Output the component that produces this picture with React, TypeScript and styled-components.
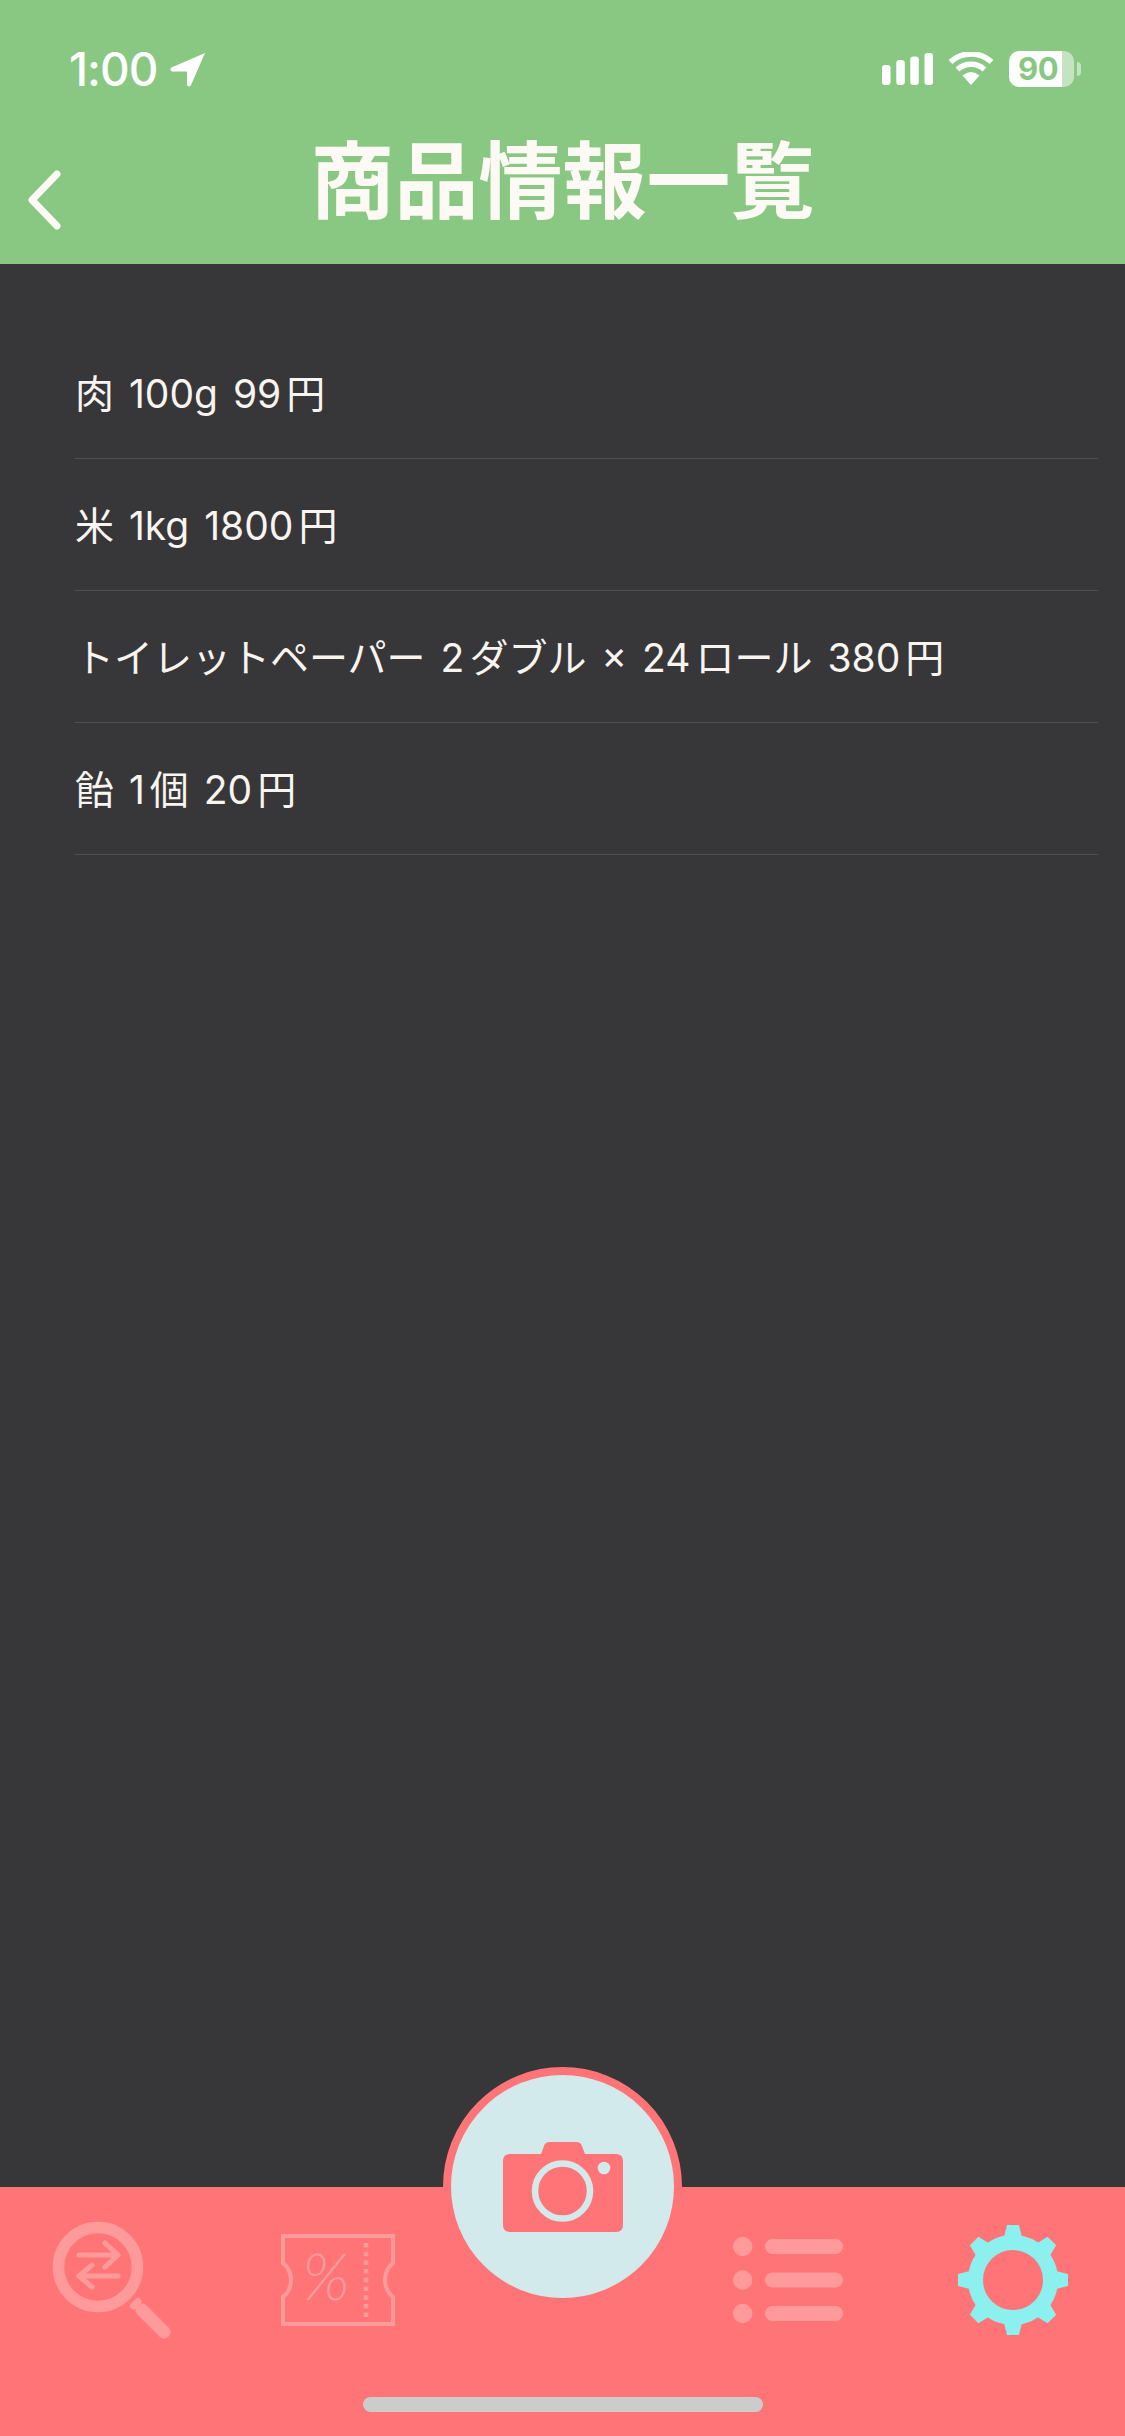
import React from "react";
import styled, { createGlobalStyle } from "styled-components";

const Global = createGlobalStyle`
  html, body { margin: 0; padding: 0; background: #373739; }
  * { box-sizing: border-box; }
`;

const GREEN = "#89c882";
const CORAL = "#ff7477";
const PALE = "#ff9a9b";
const MIST = "#d2eaeb";
const AQUA = "#8cf0ee";

const Screen = styled.div`
  width: 1125px;
  height: 2436px;
  display: flex;
  flex-direction: column;
  background: #373739;
  overflow: hidden;
  font-family: Inter, "Noto Sans CJK JP", sans-serif;
`;

const Header = styled.header`
  height: 264px;
  flex: none;
  background: ${GREEN};
  display: flex;
  flex-direction: column;
`;

const StatusBar = styled.div`
  height: 87px;
  margin-top: 50px;
  padding: 0 51px 0 69px;
  display: flex;
  justify-content: space-between;
  align-items: flex-start;
  color: #fff;
`;

const StatusGroup = styled.div`
  display: flex;
  align-items: flex-start;
  gap: ${(p: { $gap: number }) => p.$gap}px;
`;

const Clock = styled.span`
  font-size: 46px;
  font-weight: 500;
  line-height: 38px;
  letter-spacing: -1px;
`;

const StatusIcon = styled.svg`
  display: block;
  flex: none;
  margin-top: ${(p: { $top?: number }) => p.$top ?? 2}px;
`;

const Battery = styled.div`
  width: 65px;
  height: 36px;
  margin-top: 1px;
  position: relative;
  border-radius: 10px;
  background: linear-gradient(to right, #fff 82%, rgba(255, 255, 255, 0.5) 82%);
  color: ${GREEN};
  font-size: 31px;
  font-weight: 700;
  line-height: 36px;
  padding-left: 9px;
  letter-spacing: -0.5px;
  &::after {
    content: "";
    position: absolute;
    left: 68px;
    top: 11px;
    width: 4px;
    height: 14px;
    border-radius: 0 4px 4px 0;
    background: rgba(255, 255, 255, 0.5);
  }
`;

const NavBar = styled.div`
  position: relative;
  flex: 1;
  display: flex;
  align-items: center;
  justify-content: center;
`;

const BackButton = styled.svg`
  position: absolute;
  left: 26px;
  top: 43px;
`;

const Title = styled.h1`
  margin: 0 0 38px;
  color: #fdf9f5;
  font-family: "Noto Sans CJK JP", sans-serif;
  font-size: 84px;
  font-weight: 700;
  line-height: 100px;
`;

const ProductList = styled.ul`
  flex: 1;
  list-style: none;
  margin: 0;
  padding: 63px 27px 0 75px;
`;

const ProductRow = styled.li`
  height: 132px;
  border-bottom: 1px solid #505052;
  padding-bottom: 4px;
  display: flex;
  align-items: center;
  color: #f8f4f0;
  font-size: 39px;
  font-weight: 400;
  word-spacing: 4px;
  white-space: pre;
`;

const TextGap = styled.span`
  display: inline-block;
  width: 5px;
`;

const TabBar = styled.footer`
  height: 249px;
  flex: none;
  background: ${CORAL};
  display: flex;
  flex-direction: column;
  align-items: center;
`;

const TabGrid = styled.nav`
  width: 100%;
  height: 186px;
  flex: none;
  display: grid;
  grid-template-columns: repeat(5, 225px);
  align-items: center;
  justify-items: center;
`;

const TabIcon = styled.svg`
  display: block;
  overflow: visible;
`;

const CameraButton = styled.div`
  width: 239px;
  height: 239px;
  flex: none;
  align-self: start;
  margin-top: -120px;
  border: 8px solid ${CORAL};
  border-radius: 50%;
  background: ${MIST};
  display: flex;
  align-items: center;
  justify-content: center;
`;

const HomeIndicator = styled.div`
  width: 400px;
  height: 15px;
  margin-top: 24px;
  border-radius: 8px;
  background: #cccccc;
`;

const products = [
  ["肉 100g 99", "円"],
  ["米 1kg 1800", "円"],
  ["トイレットペーパー 2", "ダブル × 24", "ロール 380", "円"],
  ["飴 1", "個 20", "円"],
];

const SearchIcon = () => (
  <TabIcon width="118" height="116" viewBox="1 0 118 116" fill="none" stroke={PALE}>
    <circle cx="45" cy="45" r="39.5" strokeWidth="11.5" />
    <path d="M26 33H65M52 21L65 33L52 45M65 54H26M39 43L26 54L39 65" strokeWidth="5" strokeLinecap="round" strokeLinejoin="round" />
    <path d="M80.5 84L85 79.5" strokeWidth="7" strokeLinecap="round" />
    <path d="M89 88L111 110" strokeWidth="13" strokeLinecap="round" />
  </TabIcon>
);

const CouponIcon = () => (
  <TabIcon width="114" height="92" viewBox="0 0 114 92" fill="none" stroke={PALE}>
    <path d="M2 2H112V29L108 33Q100 46 108 59L112 63V90H2V63L6 59Q14 46 6 33L2 29Z" strokeWidth="4" />
    <path d="M85 9V84" strokeWidth="4.5" strokeDasharray="4.5 4.2" />
    <text x="21" y="66" fill={PALE} stroke="none" fontFamily="Lato, sans-serif" fontSize="66" fontWeight="300" fontStyle="italic">%</text>
  </TabIcon>
);

const CameraIcon = () => (
  <svg width="120" height="90" viewBox="0 0 120 90" style={{ display: "block" }}>
    <path d="M7 12H38L41 4Q42 0 47 0H73Q78 0 79 4L82 12H113Q120 12 120 19V83Q120 90 113 90H7Q0 90 0 83V19Q0 12 7 12Z" fill={CORAL} />
    <circle cx="59.5" cy="49" r="27.5" fill="none" stroke={MIST} strokeWidth="6.5" />
    <circle cx="101" cy="26" r="6.3" fill={MIST} />
  </svg>
);

const ListIcon = () => (
  <TabIcon width="110" height="86" viewBox="0 0 110 86" fill={PALE}>
    {[9.5, 43, 76.5].map((y) => (
      <React.Fragment key={y}>
        <circle cx="9.7" cy={y} r="9.7" />
        <rect x="32" y={y - 7.5} width="78" height="15" rx="7.5" />
      </React.Fragment>
    ))}
  </TabIcon>
);

const GearIcon = () => (
  <TabIcon width="110" height="110" viewBox="-55 -55 110 110">
    <circle r="37.5" fill="none" stroke={AQUA} strokeWidth="15" />
    {[0, 45, 90, 135, 180, 225, 270, 315].map((a) => (
      <path key={a} d="M-6 -55H6L9 -43H-9Z" fill={AQUA} transform={`rotate(${a})`} />
    ))}
  </TabIcon>
);

export default function App() {
  return (
    <Screen>
      <Global />
      <Header>
        <StatusBar>
          <StatusGroup $gap={13}>
            <Clock>1:00</Clock>
            <StatusIcon width="36" height="35" viewBox="0 0 36 35" $top={2}>
              <path d="M35 1L1.5 15.5Q-1 18 2 19.5H17V33Q19 36 21 33Z" fill="#fff" />
            </StatusIcon>
          </StatusGroup>
          <StatusGroup $gap={15}>
            <StatusIcon width="51" height="32" viewBox="0 0 51 32" $top={3} fill="#fff">
              <rect x="0" y="12" width="8.5" height="20" rx="3" />
              <rect x="14.3" y="7" width="8.5" height="25" rx="3" />
              <rect x="28.3" y="3.5" width="8.5" height="28.5" rx="3" />
              <rect x="42.5" y="0" width="8.5" height="32" rx="3" />
            </StatusIcon>
            <StatusIcon width="46" height="33" viewBox="0 0 46 33" $top={2}>
              <path d="M23 33L14.5 23.5Q23 16.5 31.5 23.5Z" fill="#fff" />
              <path d="M9.5 17.5A20 20 0 0 1 36.5 17.5" fill="none" stroke="#fff" strokeWidth="5.5" />
              <path d="M2.5 10A30 30 0 0 1 43.5 10" fill="none" stroke="#fff" strokeWidth="5.5" />
            </StatusIcon>
            <Battery>90</Battery>
          </StatusGroup>
        </StatusBar>
        <NavBar>
          <BackButton width="36" height="62" viewBox="0 0 36 62" fill="none">
            <path d="M31 5L6 31L31 57" stroke="#fdf9f5" strokeWidth="7" strokeLinecap="round" strokeLinejoin="round" />
          </BackButton>
          <Title>商品情報一覧</Title>
        </NavBar>
      </Header>
      <ProductList>
        {products.map((segments) => (
          <ProductRow key={segments.join("")}>
            {segments.map((s, i) => (
              <React.Fragment key={s}>
                {i > 0 && <TextGap />}
                {s}
              </React.Fragment>
            ))}
          </ProductRow>
        ))}
      </ProductList>
      <TabBar>
        <TabGrid>
          <SearchIcon />
          <CouponIcon />
          <CameraButton>
            <CameraIcon />
          </CameraButton>
          <ListIcon />
          <GearIcon />
        </TabGrid>
        <HomeIndicator />
      </TabBar>
    </Screen>
  );
}
